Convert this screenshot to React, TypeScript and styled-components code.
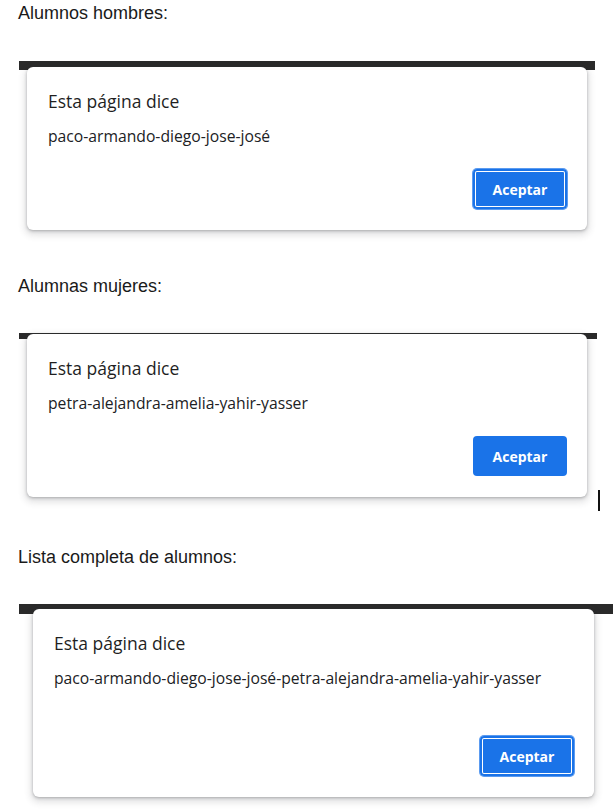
import React from "react";
import styled, { createGlobalStyle } from "styled-components";

const Global = createGlobalStyle`
  html, body {
    margin: 0;
    padding: 0;
    background: #ffffff;
    overflow: hidden;
  }
`;

const Page = styled.div`
  width: 613px;
  height: 812px;
  overflow: hidden;
  padding-left: 18px;
  box-sizing: border-box;
  display: flex;
  flex-direction: column;
`;

const Label = styled.div<{ $top: number }>`
  margin-top: ${(p) => p.$top}px;
  font-family: "Liberation Sans", Arial, sans-serif;
  font-size: 18px;
  line-height: 20px;
  color: #1a1a1a;
`;

const Window = styled.div<{ $top: number; $width: number; $strip: number; $inset: number; $left: number }>`
  position: relative;
  margin-top: ${(p) => p.$top}px;
  margin-left: 1px;
  width: ${(p) => p.$width}px;
  padding-top: ${(p) => p.$inset}px;
  padding-left: ${(p) => p.$left}px;
  box-sizing: border-box;
  background:
    linear-gradient(#2a2a2a, #2a2a2a) top left / 100% ${(p) => p.$strip}px no-repeat;
`;

const Dialog = styled.div<{ $width: number }>`
  width: ${(p) => p.$width}px;
  box-sizing: border-box;
  background: #ffffff;
  border-radius: 6px;
  padding: 22px 20px 21px 21px;
  box-shadow: 0 1px 3px rgba(60, 64, 67, 0.35), 0 3px 7px 2px rgba(60, 64, 67, 0.16);
  display: flex;
  flex-direction: column;
  font-family: "Open Sans", "Noto Sans", sans-serif;
`;

const Title = styled.div`
  font-size: 17.5px;
  line-height: 24px;
  color: #1f1f1f;
`;

const Message = styled.div`
  margin-top: 13px;
  font-size: 15.7px;
  line-height: 20px;
  color: #202124;
  white-space: nowrap;
`;

const Actions = styled.div<{ $gap: number }>`
  margin-top: ${(p) => p.$gap}px;
  display: flex;
  justify-content: flex-end;
`;

const Button = styled.button<{ $focused?: boolean }>`
  width: 94px;
  height: 40px;
  border: none;
  border-radius: 4px;
  background: #1a73e8;
  color: #ffffff;
  font-family: "Open Sans", "Noto Sans", sans-serif;
  font-weight: 700;
  font-size: 14px;
  padding: 0;
  cursor: pointer;
  box-shadow: ${(p) =>
    p.$focused ? "inset 0 0 0 2px #1a73e8, inset 0 0 0 3px #ffffff, 0 0 0 1px #5b9bf0" : "none"};
`;

const Cursor = styled.span`
  position: absolute;
  left: 579px;
  top: 157px;
  width: 2px;
  height: 21px;
  background: #111111;
`;

type AlertProps = {
  message: string;
  focused?: boolean;
  width: number;
  gap: number;
};

function Alert({ message, focused, width, gap }: AlertProps) {
  return (
    <Dialog $width={width}>
      <Title>Esta página dice</Title>
      <Message>{message}</Message>
      <Actions $gap={gap}>
        <Button $focused={focused}>Aceptar</Button>
      </Actions>
    </Dialog>
  );
}

export default function App() {
  return (
    <>
      <Global />
      <Page>
        <Label $top={3}>Alumnos hombres:</Label>
        <Window $top={38} $width={576} $strip={9} $inset={6} $left={8}>
          <Alert message="paco-armando-diego-jose-josé" focused width={560} gap={23} />
        </Window>

        <Label $top={46}>Alumnas mujeres:</Label>
        <Window $top={37} $width={578} $strip={6} $inset={1} $left={8}>
          <Alert message="petra-alejandra-amelia-yahir-yasser" width={560} gap={23} />
          <Cursor />
        </Window>

        <Label $top={50}>Lista completa de alumnos:</Label>
        <Window $top={37} $width={620} $strip={10} $inset={5} $left={14}>
          <Alert
            message="paco-armando-diego-jose-josé-petra-alejandra-amelia-yahir-yasser"
            focused
            width={561}
            gap={48}
          />
        </Window>
      </Page>
    </>
  );
}
